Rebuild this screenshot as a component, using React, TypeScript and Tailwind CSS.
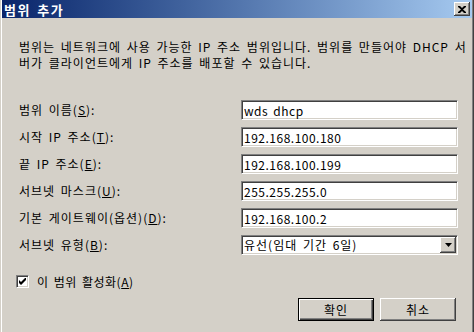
import React from "react";

const bevelUp =
  "shadow-[inset_-1px_-1px_0_#404040,inset_1px_1px_0_#ffffff,inset_-2px_-2px_0_#808080,inset_2px_2px_0_#d4d0c8]";
const sunken =
  "border border-t-[#808080] border-l-[#808080] border-b-white border-r-white shadow-[inset_1px_1px_0_#404040,inset_-1px_-1px_0_#d4d0c8]";
// Gulim-like spacing: Hangul a full 12px, wide spaces
const gulim = "tracking-[1px] [word-spacing:2px]";

function Mn({ c }: { c: string }) {
  return <span className="underline underline-offset-[1px]">{c}</span>;
}

const fields: { label: React.ReactNode; value: string }[] = [
  { label: <>범위 이름(<Mn c="S" />):</>, value: "wds dhcp" },
  { label: <>시작 IP 주소(<Mn c="T" />):</>, value: "192.168.100.180" },
  { label: <>끝 IP 주소(<Mn c="E" />):</>, value: "192.168.100.199" },
  { label: <>서브넷 마스크(<Mn c="U" />):</>, value: "255.255.255.0" },
  { label: <>기본 게이트웨이(옵션)(<Mn c="D" />):</>, value: "192.168.100.2" },
];

export default function App() {
  return (
    <div
      className="w-[474px] h-[332px] overflow-hidden bg-[#d4d0c8] text-black text-[12px] select-none"
      style={{ fontFamily: '"Noto Sans CJK KR", "Noto Sans", sans-serif' }}
    >
      <div className="h-full border-l border-l-[#d4d0c8] border-r border-r-[#404040]">
        <div className="h-full flex flex-col border-l border-l-white border-r border-r-[#808080]">
          {/* title bar */}
          <div className="h-[18px] flex items-center justify-between bg-gradient-to-r from-[#0a246a] to-[#a6caf0] pl-[2px] pr-[2px]">
            <span className="text-white font-bold text-[13px] leading-none tracking-[1.5px] [word-spacing:2px]">범위 추가</span>
            <button className={`w-[16px] h-[14px] bg-[#d4d0c8] flex items-center justify-center ${bevelUp}`}>
              <svg width="8" height="7" viewBox="0 0 8 7">
                <path d="M0 0h2l2 2 2-2h2v1L5 3.5 8 6v1H6L4 5 2 7H0V6l3-2.5L0 1z" fill="#000" />
              </svg>
            </button>
          </div>

          <div className="flex-1 flex flex-col pl-[14px] pr-[14px]">
            <div className={`mt-[21px] pl-[3px] leading-[16px] ${gulim}`}>
              <div className="h-[16px] whitespace-nowrap">범위는 네트워크에 사용 가능한 IP 주소 범위입니다. 범위를 만들어야 DHCP 서</div>
              <div className="h-[16px] whitespace-nowrap">버가 클라이언트에게 IP 주소를 배포할 수 있습니다.</div>
            </div>

            <div className="mt-[29px] flex flex-col gap-[7px]">
              {fields.map((f, i) => (
                <div key={i} className="h-[20px] flex items-center">
                  <span className={`flex-1 pl-[3px] ${gulim}`}>{f.label}</span>
                  <input
                    readOnly
                    value={f.value}
                    className={`w-[217px] h-[20px] bg-white pl-[2px] text-[12px] tracking-[0.5px] [word-spacing:2px] outline-none ${sunken}`}
                  />
                </div>
              ))}
              <div className="h-[20px] flex items-center">
                <span className={`flex-1 pl-[3px] ${gulim}`}>
                  서브넷 유형(<Mn c="B" />):
                </span>
                <div className={`w-[217px] h-[20px] bg-white flex items-center ${sunken}`}>
                  <span className={`flex-1 pl-[2px] ${gulim}`}>유선(임대 기간 6일)</span>
                  <span className={`w-[16px] h-[16px] mr-[1px] bg-[#d4d0c8] flex items-center justify-center ${bevelUp}`}>
                    <svg width="7" height="4" viewBox="0 0 7 4">
                      <path d="M0 0h7L3.5 4z" fill="#000" />
                    </svg>
                  </span>
                </div>
              </div>
            </div>

            <label className="mt-[20px] h-[13px] flex items-center gap-[8px]">
              <span className={`w-[13px] h-[13px] bg-white flex items-center justify-center ${sunken}`}>
                <svg width="7" height="7" viewBox="0 0 7 7">
                  <path d="M0 2v3l2 2 5-5V-1L2 4z" fill="#000" />
                </svg>
              </span>
              <span className="tracking-[0.5px] [word-spacing:2px]">
                이 범위 활성화(<Mn c="A" />)
              </span>
            </label>

            <div className="mt-[10px] pr-[2px] flex justify-end gap-[6px]">
              <button className={`w-[76px] h-[23px] border border-black bg-[#d4d0c8] shadow-[inset_1px_1px_0_#ffffff,inset_-1px_-1px_0_#404040,inset_-2px_-2px_0_#808080] ${gulim}`}>
                확인
              </button>
              <button className={`w-[76px] h-[23px] bg-[#d4d0c8] ${bevelUp} ${gulim}`}>취소</button>
            </div>
          </div>
        </div>
      </div>
    </div>
  );
}
